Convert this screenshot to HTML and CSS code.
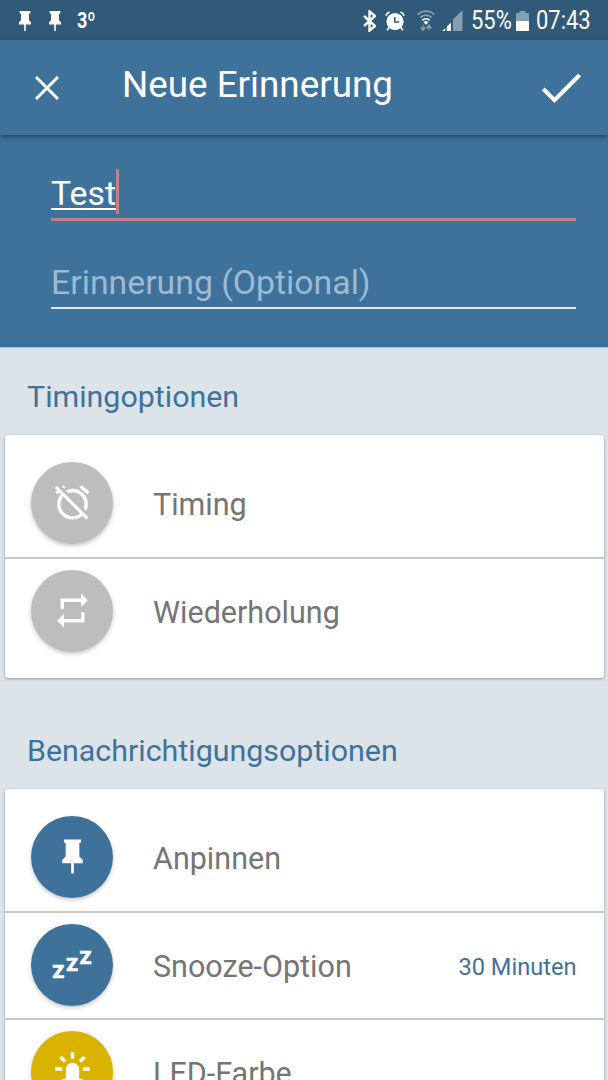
FILE: index.html
```html
<!DOCTYPE html>
<html lang="de">
<head>
    <meta charset="UTF-8">
    <meta name="viewport" content="width=device-width, initial-scale=1.0">
    <title>Neue Erinnerung</title>
    <link rel="stylesheet" href="styles.css">
</head>
<body>
    <div class="status-bar">
        <svg class="status-pin" viewBox="0 0 12 20"><path d="M0.6 0h10.8v2l-1.4 1v6.2l2 2v2.3H6.8V20H5.2v-6.5H0v-2.3l2-2V3L0.6 2z"/></svg>
        <svg class="status-pin" viewBox="0 0 12 20"><path d="M0.6 0h10.8v2l-1.4 1v6.2l2 2v2.3H6.8V20H5.2v-6.5H0v-2.3l2-2V3L0.6 2z"/></svg>
        <span class="temperature">3º</span>
        <div class="status-right">
            <svg class="bluetooth" viewBox="0 0 13 22"><path d="M1 6l11 10-5.5 4.7V1.3L12 6 1 16"/></svg>
            <svg class="status-alarm" viewBox="0 0 20 20">
                <circle cx="10" cy="10.5" r="8.6"/>
                <path class="feet" d="M4.2 16.5L2 19.3M15.8 16.5l2.2 2.8M0.8 4.6A6 6 0 0 1 4.6 1M19.2 4.6A6 6 0 0 0 15.4 1"/>
                <path class="hands" d="M9.8 6v5h4.4"/>
            </svg>
            <svg class="wifi" viewBox="0 0 18 21">
                <path class="dim" d="M0.8 4.6a11.5 11.5 0 0 1 16.4 0M3.3 7.6a8 8 0 0 1 11.4 0"/>
                <path d="M5.4 10.3a5 5 0 0 1 7.2 0"/>
                <path class="dot" d="M6.6 12.2a3.4 3.4 0 0 1 4.8 0L9 14.8z"/>
                <path class="arrows" d="M6 14.5v4M12 21v-3.5M3.6 17.6h4.8L6 21zM9.6 18h4.8L12 14.6z"/>
            </svg>
            <svg class="signal" viewBox="0 0 21 21">
                <path class="dim" d="M11 9.5L20.5 0v21H11z"/>
                <path d="M0 21l3.5-3V21zM4.6 17l4.4-4.6V21H4.6z"/>
                <path class="gaps" d="M4 14v7M9.8 9v12"/>
            </svg>
            <span class="percent">55%</span>
            <svg class="battery" viewBox="0 0 13 20">
                <path class="dim" d="M0 2h3.5V0h6v2H13v8H0z"/>
                <path d="M0 10h13v10H0z"/>
            </svg>
            <span class="clock">07:43</span>
        </div>
    </div>

    <header class="toolbar">
        <svg class="close" viewBox="0 0 24 24"><path d="M1 1l22 22M23 1L1 23"/></svg>
        <h1>Neue Erinnerung</h1>
        <svg class="confirm" viewBox="0 0 39 30"><path d="M1.3 16L12.5 27.2 37.6 2"/></svg>
    </header>

    <div class="form">
        <div class="field active"><span class="typed">Test</span><span class="caret"></span></div>
        <div class="field"><span class="hint">Erinnerung (Optional)</span></div>
    </div>

    <h2>Timingoptionen</h2>
    <div class="card">
        <div class="row">
            <div class="circle">
                <svg viewBox="0 0 24 24"><path d="M12 6c3.87 0 7 3.13 7 7 0 .84-.16 1.65-.43 2.4l1.52 1.52c.58-1.19.91-2.51.91-3.92 0-4.97-4.03-9-9-9-1.41 0-2.73.33-3.92.91L9.6 6.43C10.35 6.16 11.16 6 12 6zm10-.28l-4.6-3.86-1.29 1.53 4.6 3.86L22 5.72zM2.92 2.29L1.65 3.57 2.98 4.9l-1.11.93 1.42 1.42 1.11-.94.8.8C3.83 8.69 3 10.75 3 13c0 4.97 4.02 9 9 9 2.25 0 4.31-.83 5.89-2.2l2.2 2.2 1.27-1.27L3.89 3.27l-.97-.98zm13.55 16.1C15.26 19.39 13.7 20 12 20c-3.87 0-7-3.13-7-7 0-1.7.61-3.26 1.61-4.47l9.86 9.86zM8.02 3.28L6.6 1.86l-.86.71 1.42 1.42.86-.71z"/></svg>
            </div>
            <span class="label">Timing</span>
        </div>
        <div class="row">
            <div class="circle">
                <svg viewBox="0 0 24 24"><path d="M7 7h10v3l4-4-4-4v3H5v6h2V7zm10 10H7v-3l-4 4 4 4v-3h12v-6h-2v4z"/></svg>
            </div>
            <span class="label">Wiederholung</span>
        </div>
    </div>

    <h2 class="second">Benachrichtigungsoptionen</h2>
    <div class="card">
        <div class="row">
            <div class="circle blue">
                <svg viewBox="0 0 24 24"><path d="M16 12V4h1V2H7v2h1v8l-2 2v2h5.2v6h1.6v-6H18v-2l-2-2z"/></svg>
            </div>
            <span class="label">Anpinnen</span>
        </div>
        <div class="row">
            <div class="circle blue">
                <div class="snooze"><span>Z</span><span>Z</span><span>Z</span></div>
            </div>
            <span class="label">Snooze-Option</span>
            <span class="value">30 Minuten</span>
        </div>
        <div class="row">
            <div class="circle yellow">
                <svg viewBox="0 0 40 40">
                    <path d="M13.5 26v-9a6.5 6.5 0 0 1 13 0v9H30v3H10v-3z"/>
                    <path class="rays" d="M20 0v6.5M3 16.5h7M30 16.5h7M8.2 4.8l4.6 4.6M31.8 4.8l-4.6 4.6"/>
                </svg>
            </div>
            <span class="label">LED-Farbe</span>
        </div>
    </div>
</body>
</html>
```
FILE: styles.css
```css
* {
    box-sizing: border-box;
}

body {
    font-family: Roboto, sans-serif;
    background: #dce4e9;
    color: #757575;
    height: 1080px;
    margin: 0;
    overflow: hidden;
}

svg {
    display: block;
    fill: #fff;
    flex-shrink: 0;
}

h1, h2 {
    margin: 0;
    font-weight: 400;
}

/* Statusleiste */
.status-bar {
    display: flex;
    align-items: center;
    height: 40px;
    padding: 1px 16px 0 19px;
    background: #315978;
    color: #fff;
}

.status-pin {
    width: 12px;
    height: 20px;
    margin-right: 18px;
}

.temperature {
    width: 20px;
    margin-left: -2px;
    font-size: 22px;
    font-weight: 700;
    line-height: 39px;
    transform: scaleX(0.82);
    transform-origin: left;
}

.status-right {
    display: flex;
    align-items: center;
    margin-left: auto;
}

.status-right .dim {
    opacity: 0.42;
}

.bluetooth {
    width: 13px;
    height: 22px;
    margin-right: 9px;
    fill: none;
    stroke: #fff;
    stroke-width: 2.4;
}

.status-alarm {
    width: 20px;
    height: 20px;
    margin-right: 12px;
}

.status-alarm .feet {
    fill: none;
    stroke: #fff;
    stroke-width: 1.8;
}

.status-alarm .hands {
    fill: none;
    stroke: #315978;
    stroke-width: 1.5;
}

.wifi {
    width: 18px;
    height: 21px;
    margin-right: 7px;
    fill: none;
    stroke: #fff;
    stroke-width: 1.7;
}

.wifi .dot {
    fill: #fff;
    stroke: none;
}

.wifi .arrows {
    fill: #fff;
    stroke-width: 1;
    opacity: 0.4;
}

.signal {
    width: 21px;
    height: 21px;
    margin-right: 8px;
}

.signal .gaps {
    stroke: #315978;
    stroke-width: 1;
}

.percent, .clock {
    font-size: 25.5px;
    line-height: 39px;
    white-space: nowrap;
    transform: scaleX(0.86);
    transform-origin: left;
}

.percent {
    width: 40px;
    margin-right: 5px;
}

.battery {
    width: 13px;
    height: 20px;
    margin-right: 7px;
}

.clock {
    width: 56px;
}

/* Kopfzeile */
.toolbar {
    position: relative;
    display: flex;
    align-items: center;
    height: 95px;
    padding: 0 27px 0 35px;
    background: #3f729b;
    box-shadow: 0 2px 5px rgba(0, 0, 0, 0.4);
    color: #fff;
}

.toolbar svg {
    fill: none;
    stroke: #fff;
}

.close {
    width: 24px;
    height: 24px;
    stroke-width: 3;
}

.toolbar h1 {
    margin: -6px auto 0 63px;
    font-size: 36.8px;
    line-height: 44px;
}

.confirm {
    width: 39px;
    height: 30px;
    stroke-width: 4;
}

/* Eingabefelder */
.form {
    height: 213px;
    padding: 34px 32px 0 51px;
    background: #3f729b;
    border-bottom: 1px solid #a9bccb;
    font-size: 33.8px;
}

.field {
    display: flex;
    height: 52px;
    margin-bottom: 36px;
    border-bottom: 2px solid #dce9f2;
    line-height: 51px;
}

.field.active {
    border-bottom: 3px solid #c08089;
    line-height: 50px;
}

.typed {
    height: 41px;
    border-bottom: 2px solid #fff;
    color: #fff;
}

.caret {
    width: 3px;
    height: 45px;
    background: #c08089;
}

.hint {
    color: #9bbad3;
}

/* Optionen */
h2 {
    height: 87px;
    padding: 31px 27px 0;
    color: #3f729b;
    font-size: 30.4px;
    line-height: 36px;
}

h2.second {
    height: 111px;
    padding-top: 55px;
}

.card {
    margin: 0 4.5px;
    padding: 14px 0;
    background: #fff;
    border-radius: 3px;
    box-shadow: 0 1px 3px rgba(0, 0, 0, 0.35);
}

.row {
    display: flex;
    align-items: center;
    height: 107.5px;
    padding: 0 27px 0 26.5px;
}

.row + .row {
    border-top: 2px solid #c8c8c8;
    padding-bottom: 1px;
}

.circle {
    display: flex;
    align-items: center;
    justify-content: center;
    width: 82px;
    height: 82px;
    border-radius: 50%;
    background: #bdbdbd;
    box-shadow: 0 2px 4px rgba(0, 0, 0, 0.22);
}

.circle.blue {
    background: #3f729b;
}

.circle.yellow {
    background: #d9b300;
}

.circle svg {
    width: 41px;
    height: 41px;
}

.rays {
    stroke: #fff;
    stroke-width: 3.4;
}

.snooze {
    display: flex;
    gap: 2px;
    color: #fff;
    font-size: 19px;
    font-weight: 900;
    line-height: 20px;
    -webkit-text-stroke: 0.6px #fff;
}

.snooze span:first-child {
    margin-top: 14px;
}

.snooze span:nth-child(2) {
    margin-top: 7px;
}

.label {
    margin: 4px 0 0 40px;
    font-size: 30.5px;
    line-height: 36px;
}

.value {
    margin: 5px 0 0 auto;
    color: #3f729b;
    font-size: 23.6px;
}
```
